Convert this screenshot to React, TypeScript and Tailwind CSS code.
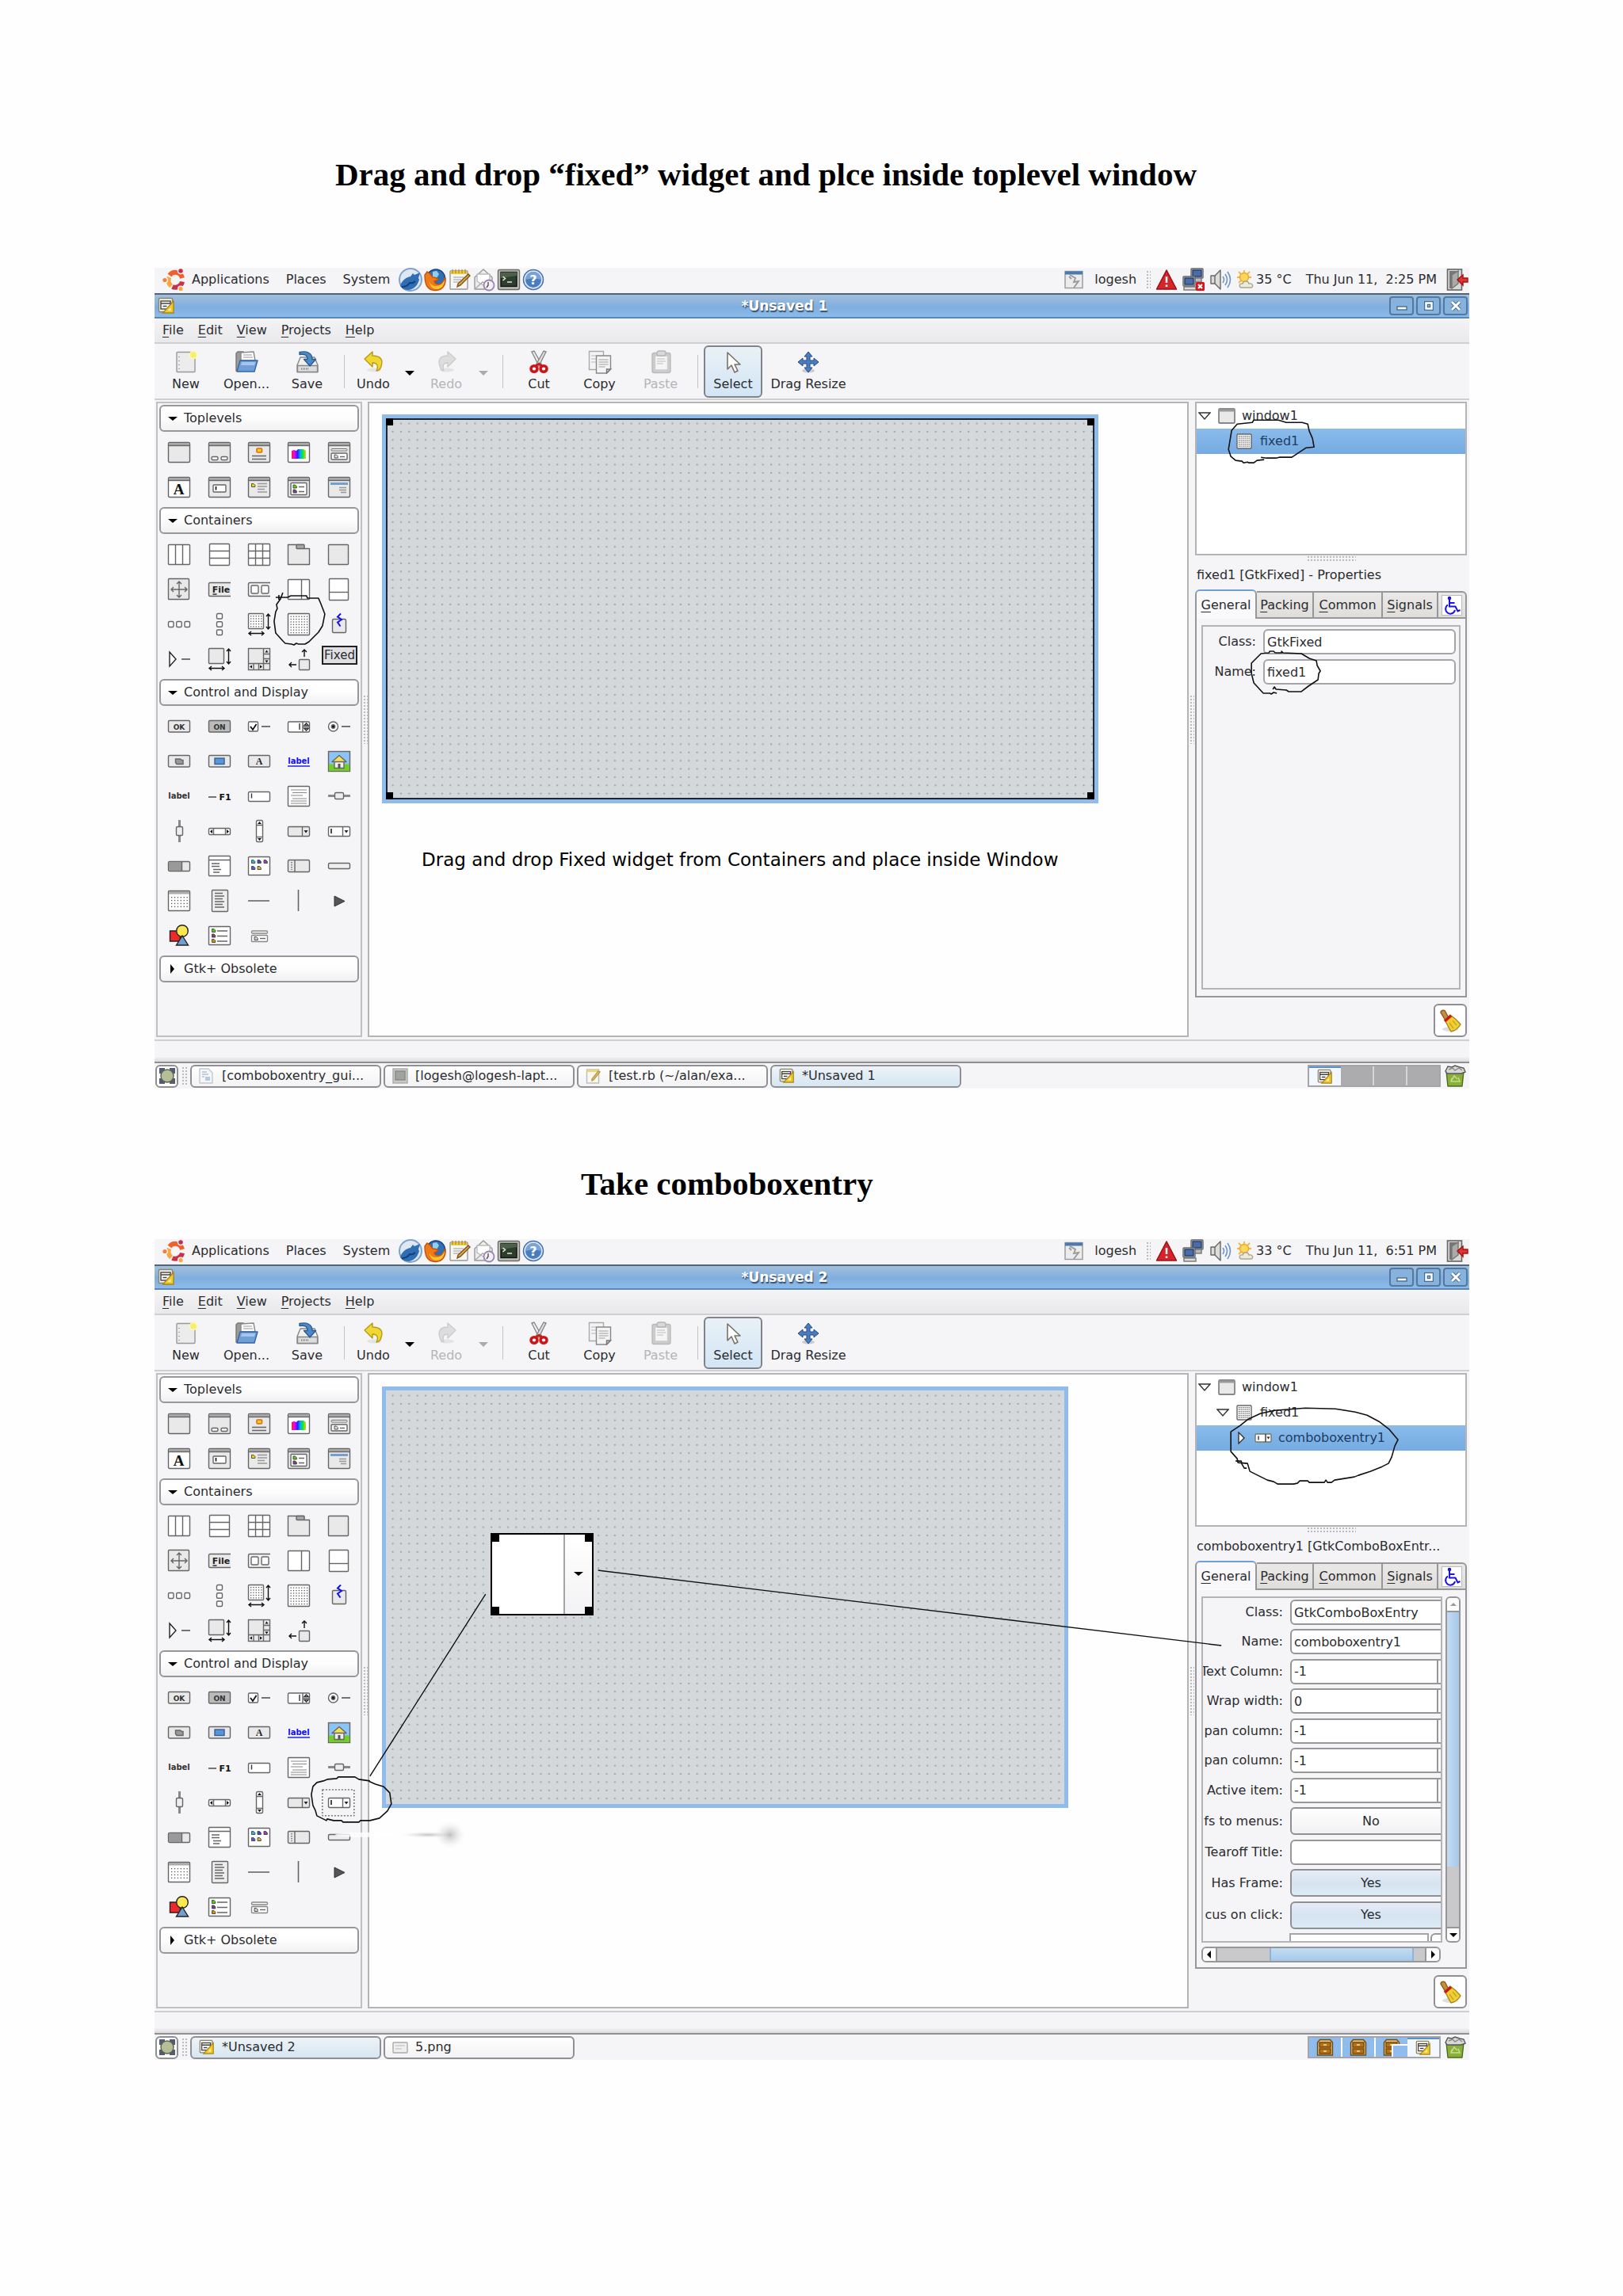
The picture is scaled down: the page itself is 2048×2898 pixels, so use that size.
import type { ReactNode } from 'react';

type Field = { label: string; value: string; kind: 'text' | 'spin' | 'toggle' };

const G = '#666';

const Svg = ({ children, size = 'w-[30px] h-[30px]', box = '0 0 30 30' }: { children: ReactNode; size?: string; box?: string }) => (
  <svg className={`${size} block shrink-0`} viewBox={box} fill="none" stroke={G} strokeWidth="1.4" aria-hidden="true">
    {children}
  </svg>
);

const Frame = ({ fill = '#e9e9ea', children }: { fill?: string; children?: ReactNode }) => (
  <Svg>
    <rect x="1.5" y="2.5" width="27" height="25" rx="1.5" fill={fill} />
    <path d="M2 3h26v3.5H2z" fill="#a9a9a9" stroke="none" />
    <path d="M2 6.5h26" />
    {children}
  </Svg>
);

const dots = (x: number, y: number, cols: number, rows: number, step: number) => {
  const out = [];
  for (let r = 0; r < rows; r++) {
    for (let c = 0; c < cols; c++) {
      out.push(<rect key={`${r}-${c}`} x={x + c * step} y={y + r * step} width="1.3" height="1.3" fill="#555" stroke="none" />);
    }
  }
  return out;
};

const page = (x: number, y: number, color: string) => (
  <path d={`M${x} ${y}h2.5l1.8 1.8v2.2h-4.3z`} fill={color} stroke="#444" strokeWidth="0.9" />
);

const toplevels = [
  { name: 'Window', icon: <Frame /> },
  {
    name: 'Dialog Box',
    icon: (
      <Frame>
        <rect x="5" y="20.5" width="8" height="4" rx="1.5" fill="#fff" />
        <rect x="17" y="20.5" width="8" height="4" rx="1.5" fill="#fff" />
      </Frame>
    ),
  },
  {
    name: 'About Dialog',
    icon: (
      <Frame>
        <rect x="12" y="10" width="6.5" height="5" rx="1" fill="#ffd21f" stroke="#e06a10" strokeWidth="1.6" />
        <path d="M6 19.5h18M6 23.5h18" />
      </Frame>
    ),
  },
  {
    name: 'Color Selection Dialog',
    icon: (
      <Frame fill="#fff">
        <defs>
          <linearGradient id="rainbow">
            <stop offset="0" stopColor="#f22" />
            <stop offset="0.2" stopColor="#e0f" />
            <stop offset="0.42" stopColor="#22f" />
            <stop offset="0.6" stopColor="#0af" />
            <stop offset="0.78" stopColor="#0e3" />
            <stop offset="1" stopColor="#dc2" />
          </linearGradient>
        </defs>
        <path d="M6 23V13l3-1 3 1 2-2h7l3 2v10z" fill="url(#rainbow)" stroke="none" />
      </Frame>
    ),
  },
  {
    name: 'File Chooser Dialog',
    icon: (
      <Frame>
        <rect x="5" y="10.5" width="20" height="2.5" rx="1" fill="#fff" strokeWidth="1" />
        <rect x="5" y="16" width="20" height="8" rx="1" fill="#fff" />
        {page(9, 18, '#ddd')}
        <path d="M16 20.5h6" />
      </Frame>
    ),
  },
  {
    name: 'Font Selection Dialog',
    icon: (
      <Frame fill="#fff">
        <text x="14.5" y="23.5" textAnchor="middle" fontFamily="Liberation Serif, serif" fontWeight="bold" fontSize="19" fill="#111" stroke="none">A</text>
      </Frame>
    ),
  },
  {
    name: 'Input Dialog',
    icon: (
      <Frame>
        <rect x="7" y="12" width="16" height="9" rx="1" fill="#fff" />
        <path d="M10.5 14v4.5" stroke="#111" strokeWidth="1.6" />
      </Frame>
    ),
  },
  {
    name: 'Message Dialog',
    icon: (
      <Frame>
        {page(5.5, 10.5, '#f5d300')}
        <path d="M13 10.5h12M13 14h12M13 17.5h9M13 21h12" stroke="#999" />
      </Frame>
    ),
  },
  {
    name: 'Recent Chooser Dialog',
    icon: (
      <Frame>
        <rect x="5" y="9.5" width="20" height="15" rx="1" fill="#fff" />
        {page(8, 12, '#5c0')}
        {page(8, 18, '#747')}
        <path d="M15 14.5h7M15 20.5h7" />
      </Frame>
    ),
  },
  {
    name: 'Assistant',
    icon: (
      <Frame>
        <path d="M4 10.5h22" stroke="#729fcf" strokeWidth="3" />
        <path d="M15 15.5h9M15 18.5h9M17 21.5h7" stroke="#999" />
      </Frame>
    ),
  },
];

const containers = [
  {
    name: 'Horizontal Box',
    icon: (
      <Svg>
        <rect x="1.5" y="2.5" width="27" height="25" rx="1" fill="#fff" />
        <path d="M10.5 3v24M19.5 3v24" />
      </Svg>
    ),
  },
  {
    name: 'Vertical Box',
    icon: (
      <Svg>
        <rect x="2.5" y="1.5" width="25" height="27" rx="1" fill="#fff" />
        <path d="M3 10.5h24M3 19.5h24" />
      </Svg>
    ),
  },
  {
    name: 'Table',
    icon: (
      <Svg>
        <rect x="1.5" y="1.5" width="27" height="27" rx="1" fill="#fff" />
        <path d="M10.5 2v26M19.5 2v26M2 10.5h26M2 19.5h26" />
      </Svg>
    ),
  },
  {
    name: 'Notebook',
    icon: (
      <Svg>
        <path d="M1.5 2.5h20v5h7v20h-27z" fill="#e9e9ea" strokeLinejoin="round" />
        <rect x="12" y="2.5" width="10" height="5" rx="1" fill="#aaa" />
      </Svg>
    ),
  },
  { name: 'Frame', icon: <Svg><rect x="1.5" y="2.5" width="25" height="25" rx="1" fill="#e9e9ea" /></Svg> },
  {
    name: 'Aspect Frame',
    icon: (
      <Svg>
        <rect x="1.5" y="1.5" width="26" height="26" rx="1" fill="#e9e9ea" />
        <path d="M15 5v20M5 15h20M12 8l3-3 3 3M12 22l3 3 3-3M8 12l-3 3 3 3M22 12l3 3-3 3" />
      </Svg>
    ),
  },
  {
    name: 'Menu Bar',
    icon: (
      <Svg>
        <path d="M29 6.5H3A1.5 1.5 0 0 0 1.5 8v14A1.5 1.5 0 0 0 3 23.5h26" fill="#e9e9ea" />
        <text x="17" y="19" textAnchor="middle" fontFamily="DejaVu Sans, sans-serif" fontWeight="bold" fontSize="11" fill="#222" stroke="none">File</text>
        <path d="M6.5 21h5" stroke="#222" />
      </Svg>
    ),
  },
  {
    name: 'Toolbar',
    icon: (
      <Svg>
        <path d="M29 6.5H3A1.5 1.5 0 0 0 1.5 8v14A1.5 1.5 0 0 0 3 23.5h26" fill="#f2f2f2" />
        <rect x="5" y="10" width="9" height="10" rx="1.5" fill="#fff" />
        <rect x="18" y="10" width="9" height="10" rx="1.5" fill="#fff" />
      </Svg>
    ),
  },
  {
    name: 'Horizontal Panes',
    icon: (
      <Svg>
        <rect x="1.5" y="2.5" width="27" height="25" rx="1" fill="#fff" />
        <path d="M18.5 3v24" />
      </Svg>
    ),
  },
  {
    name: 'Vertical Panes',
    icon: (
      <Svg>
        <rect x="2.5" y="1.5" width="24" height="27" rx="1" fill="#fff" />
        <path d="M3 18.5h23" />
      </Svg>
    ),
  },
  {
    name: 'Horizontal Button Box',
    icon: (
      <Svg>
        <rect x="1.5" y="11.5" width="6.5" height="7" rx="1.5" fill="#fff" />
        <rect x="11.7" y="11.5" width="6.5" height="7" rx="1.5" fill="#fff" />
        <rect x="22" y="11.5" width="6.5" height="7" rx="1.5" fill="#fff" />
      </Svg>
    ),
  },
  {
    name: 'Vertical Button Box',
    icon: (
      <Svg>
        <rect x="11.5" y="1.5" width="7" height="6.5" rx="1.5" fill="#fff" />
        <rect x="11.5" y="11.7" width="7" height="6.5" rx="1.5" fill="#fff" />
        <rect x="11.5" y="22" width="7" height="6.5" rx="1.5" fill="#fff" />
      </Svg>
    ),
  },
  {
    name: 'Layout',
    icon: (
      <Svg>
        <rect x="1.5" y="1.5" width="19" height="19" rx="1" fill="#fff" />
        {dots(4, 4, 5, 5, 3.3)}
        <path d="M26.5 2v19M24 5l2.500-3 2.500 3M24 18l2.500 3 2.500-3M2 26.500h19M5 24l-3 2.500 3 2.500M18 24l3 2.500-3 2.500" stroke="#111" />
      </Svg>
    ),
  },
  {
    name: 'Fixed',
    icon: (
      <Svg>
        <rect x="1.5" y="1.5" width="27" height="27" rx="1" fill="#fff" />
        {dots(4.5, 4.5, 7, 7, 3.4)}
      </Svg>
    ),
  },
  {
    name: 'Event Box',
    icon: (
      <Svg>
        <rect x="6.5" y="8.5" width="17" height="17" rx="1.5" fill="#e9e9ea" />
        <path d="M17 1.5l-4 4 5 3.5-5 3.5 3.5 5" stroke="#11e" strokeWidth="2" />
      </Svg>
    ),
  },
  {
    name: 'Expander',
    icon: (
      <Svg>
        <path d="M3 6l8 9-8 9z" fill="#fff" stroke="#222" />
        <path d="M18 15h11" strokeWidth="1.8" />
      </Svg>
    ),
  },
  {
    name: 'Viewport',
    icon: (
      <Svg>
        <rect x="1.5" y="1.5" width="19" height="19" rx="1" fill="#e9e9ea" />
        <path d="M26.5 2v19M24 5l2.5-3 2.5 3M24 18l2.5 3 2.5-3M2 26.5h19M5 24l-3 2.5 3 2.5M18 24l3 2.5-3 2.5" stroke="#111" />
      </Svg>
    ),
  },
  {
    name: 'Scrolled Window',
    icon: (
      <Svg>
        <rect x="1.5" y="1.5" width="27" height="27" fill="#e9e9ea" />
        <path d="M20.5 2v26M2 20.5h26M20.5 8.5h8M20.5 14.5h8M8 20.5v8M14.500 20.500v8" />
        <path d="M22.5 6.5l2-3 2 3zM22.5 16.5l2 3 2-3zM6 22.5l-3 2 3 2zM16 22.5l3 2-3 2z" fill="#111" stroke="none" />
      </Svg>
    ),
  },
  {
    name: 'Alignment',
    icon: (
      <Svg>
        <rect x="15.5" y="15.5" width="13" height="13" rx="1" fill="#e9e9ea" />
        <path d="M22 12V3M19 6l3-3 3 3M12 22H3M6 19l-3 3 3 3" stroke="#111" />
      </Svg>
    ),
  },
];

const controls = [
  {
    name: 'Button',
    icon: (
      <Svg>
        <rect x="1.5" y="7.5" width="27" height="14.5" rx="1.5" fill="#e9e9ea" />
        <text x="15" y="18.5" textAnchor="middle" fontFamily="DejaVu Sans, sans-serif" fontSize="9" fontWeight="bold" fill="#333" stroke="none">OK</text>
      </Svg>
    ),
  },
  {
    name: 'Toggle Button',
    icon: (
      <Svg>
        <rect x="1.5" y="7.5" width="27" height="14.5" rx="1.5" fill="#bbb" />
        <text x="15" y="18.5" textAnchor="middle" fontFamily="DejaVu Sans, sans-serif" fontSize="9" fontWeight="bold" fill="#333" stroke="none">ON</text>
      </Svg>
    ),
  },
  {
    name: 'Check Button',
    icon: (
      <Svg>
        <rect x="1.5" y="9" width="12" height="12" rx="1.5" fill="#fff" />
        <path d="M4 15l3 4 4.5-7" stroke="#111" strokeWidth="1.8" />
        <path d="M18 15h11" strokeWidth="1.8" />
      </Svg>
    ),
  },
  {
    name: 'Spin Button',
    icon: (
      <Svg>
        <rect x="1.5" y="9" width="27" height="13" rx="1.5" fill="#fff" />
        <path d="M20 9v13M20 15.5h8" />
        <path d="M16 11v8M22 13.5l2.5-2.5 2.5 2.5zM22 17.5l2.5 2.5 2.5-2.5z" stroke="#333" />
      </Svg>
    ),
  },
  {
    name: 'Radio Button',
    icon: (
      <Svg>
        <circle cx="7.5" cy="15" r="6" fill="#fff" />
        <circle cx="7.5" cy="15" r="2.2" fill="#111" />
        <path d="M18 15h11" strokeWidth="1.8" />
      </Svg>
    ),
  },
  {
    name: 'File Chooser Button',
    icon: (
      <Svg>
        <rect x="1.5" y="7.5" width="27" height="14.5" rx="1.5" fill="#e9e9ea" />
        <path d="M10.5 12h6l2 1.5h1.5v5h-8l-1.5-2z" fill="#999" />
      </Svg>
    ),
  },
  {
    name: 'Color Button',
    icon: (
      <Svg>
        <rect x="1.5" y="7.5" width="27" height="14.5" rx="1.5" fill="#e9e9ea" />
        <rect x="9" y="11" width="12" height="7.5" fill="#5b95d6" stroke="#345f9c" />
      </Svg>
    ),
  },
  {
    name: 'Font Button',
    icon: (
      <Svg>
        <rect x="1.5" y="7.5" width="27" height="14.5" rx="1.5" fill="#e9e9ea" />
        <text x="15" y="19" textAnchor="middle" fontFamily="Liberation Serif, serif" fontSize="12" fontWeight="bold" fill="#222" stroke="none">A</text>
      </Svg>
    ),
  },
  {
    name: 'Link Button',
    icon: (
      <Svg>
        <text x="15" y="18" textAnchor="middle" fontFamily="DejaVu Sans, sans-serif" fontSize="10" fontWeight="bold" fill="#11e" stroke="none">label</text>
        <path d="M1 21h28" stroke="#11e" />
      </Svg>
    ),
  },
  {
    name: 'Image',
    icon: (
      <Svg>
        <rect x="1.5" y="2.5" width="27" height="25" fill="#8cc4f7" />
        <path d="M2 18.5h26v8.500H2z" fill="#6fd020" stroke="none" />
        <path d="M9 15h12v8.5H9z" fill="#eee" />
        <path d="M6 15.5l9-8 9 8z" fill="#f3e14e" strokeLinejoin="round" />
        <path d="M13.5 18h3v5.5h-3z" fill="#555" stroke="none" />
      </Svg>
    ),
  },
  {
    name: 'Label',
    icon: (
      <Svg>
        <text x="15" y="18" textAnchor="middle" fontFamily="DejaVu Sans, sans-serif" fontSize="10" fontWeight="bold" fill="#333" stroke="none">label</text>
      </Svg>
    ),
  },
  {
    name: 'Accelerator Label',
    icon: (
      <Svg>
        <path d="M1 16h10" strokeWidth="1.8" />
        <text x="22" y="20" textAnchor="middle" fontFamily="DejaVu Sans, sans-serif" fontSize="11" fontWeight="bold" fill="#111" stroke="none">F1</text>
      </Svg>
    ),
  },
  {
    name: 'Text Entry',
    icon: (
      <Svg>
        <rect x="1.5" y="9.5" width="27" height="12" rx="1.5" fill="#fff" />
        <path d="M5.5 11.5v6" stroke="#333" />
      </Svg>
    ),
  },
  {
    name: 'Text View',
    icon: (
      <Svg>
        <rect x="1.5" y="2.5" width="27" height="25" rx="1" fill="#fff" />
        <path d="M5 7h20M7 10.5h18M5 14h15M7 18h18M5 21h20M5 24h20" stroke="#888" strokeWidth="1" />
      </Svg>
    ),
  },
  {
    name: 'Horizontal Scale',
    icon: (
      <Svg>
        <path d="M1 14.5h28" stroke="#888" strokeWidth="3" />
        <rect x="9.5" y="10.5" width="11" height="8" rx="1.5" fill="#eee" />
      </Svg>
    ),
  },
  {
    name: 'Vertical Scale',
    icon: (
      <Svg>
        <path d="M15.5 1v28" stroke="#888" strokeWidth="3" />
        <rect x="11.5" y="9.5" width="8" height="11" rx="1.5" fill="#eee" />
      </Svg>
    ),
  },
  {
    name: 'Horizontal Scrollbar',
    icon: (
      <Svg>
        <rect x="1.5" y="11.5" width="27" height="8" rx="1.5" fill="#fff" />
        <path d="M7.5 11.5v8M22.5 11.5v8" />
        <path d="M6 13l-3 2.5 3 2.5zM24 13l3 2.5-3 2.5z" fill="#111" stroke="none" />
      </Svg>
    ),
  },
  {
    name: 'Vertical Scrollbar',
    icon: (
      <Svg>
        <rect x="11.5" y="1.5" width="8" height="27" rx="1.5" fill="#fff" />
        <path d="M11.5 7.5h8M11.5 22.5h8" />
        <path d="M13 6l2.5-3 2.5 3zM13 24l2.5 3 2.5-3z" fill="#111" stroke="none" />
      </Svg>
    ),
  },
  {
    name: 'Combo Box',
    icon: (
      <Svg>
        <rect x="1.5" y="9.5" width="27" height="12" rx="1.5" fill="#e9e9ea" />
        <path d="M19.5 9.5v12" />
        <path d="M21.5 14l2.5 3.5 2.5-3.5z" fill="#222" stroke="none" />
      </Svg>
    ),
  },
  {
    name: 'Combo Box Entry',
    icon: (
      <Svg>
        <rect x="1.5" y="9.5" width="27" height="12" rx="1.5" fill="#fff" />
        <path d="M19.5 9.5v12" />
        <path d="M5 12v6" stroke="#111" strokeWidth="1.5" />
        <path d="M21.5 14l2.5 3.5 2.5-3.5z" fill="#222" stroke="none" />
      </Svg>
    ),
  },
  {
    name: 'Progress Bar',
    icon: (
      <Svg>
        <rect x="1.5" y="9.5" width="27" height="12" rx="1.5" fill="#e9e9ea" />
        <path d="M2 10h16v11H2z" fill="#999" stroke="none" />
        <path d="M18.5 9.5v12" />
      </Svg>
    ),
  },
  {
    name: 'Tree View',
    icon: (
      <Svg>
        <rect x="1.5" y="2.5" width="27" height="25" rx="1" fill="#fff" />
        <path d="M2 7.5h26M5 12h10M5 15.5h10M7 19.5h10M7 23h8" />
      </Svg>
    ),
  },
  {
    name: 'Icon View',
    icon: (
      <Svg>
        <rect x="1.5" y="3.5" width="27" height="23" rx="1" fill="#fff" />
        {page(5.5, 7.5, '#2bc')}
        {page(13, 7.5, '#44c')}
        {page(21, 7.5, '#a3b')}
        {page(5.5, 15.5, '#55d')}
        {page(13, 15.5, '#da3')}
      </Svg>
    ),
  },
  {
    name: 'Handle Box',
    icon: (
      <Svg>
        <rect x="1.5" y="7.5" width="27" height="15" rx="1.5" fill="#e9e9ea" />
        <path d="M10 7.5v15" />
        <path d="M6 10v10" strokeDasharray="1.5 1.5" />
      </Svg>
    ),
  },
  { name: 'Status Bar', icon: <Svg><rect x="1.5" y="11.5" width="27" height="7" rx="1.5" fill="#eee" /></Svg> },
  {
    name: 'Calendar',
    icon: (
      <Svg>
        <rect x="1.5" y="2.5" width="27" height="25" rx="1" fill="#fff" />
        <path d="M2 3h26v3.5H2z" fill="#aaa" stroke="none" />
        {dots(5, 10, 6, 4, 3.9)}
      </Svg>
    ),
  },
  {
    name: 'Popup Menu',
    icon: (
      <Svg>
        <rect x="5.5" y="1.5" width="20" height="27" rx="1" fill="#eee" />
        <path d="M9 5.5h10M9 9h12M9 12.5h10M9 16h12M9 19.5h10M9 23h12" />
      </Svg>
    ),
  },
  { name: 'Horizontal Separator', icon: <Svg><path d="M1 15h27" strokeWidth="1.6" /></Svg> },
  { name: 'Vertical Separator', icon: <Svg><path d="M14.5 1v27" strokeWidth="1.6" /></Svg> },
  { name: 'Arrow', icon: <Svg><path d="M9 9l13 6.5L9 22z" fill="#555" stroke="#333" strokeWidth="1" /></Svg> },
  {
    name: 'Drawing Area',
    icon: (
      <Svg>
        <path d="M3.5 9h13v13h-13z" fill="#ef2929" stroke="#222" />
        <circle cx="19" cy="9" r="7.3" fill="#fce94f" stroke="#222" />
        <path d="M19 15l7.5 12h-15z" fill="#729fcf" stroke="#222" />
      </Svg>
    ),
  },
  {
    name: 'Recent Chooser',
    icon: (
      <Svg>
        <rect x="1.5" y="3.5" width="27" height="23" rx="1" fill="#fff" />
        {page(5.5, 6.5, '#5c0')}
        {page(5.5, 13, '#747')}
        {page(5.5, 19.5, '#d80')}
        <path d="M12 9h13M12 15.5h13M12 22h13" />
      </Svg>
    ),
  },
  {
    name: 'File Chooser Widget',
    icon: (
      <Svg>
        <rect x="5.5" y="9" width="20" height="3" rx="1.2" fill="#fff" stroke="#888" />
        <rect x="5.5" y="14.5" width="20" height="8" rx="1" fill="#fff" stroke="#888" />
        {page(9, 16.5, '#ccc')}
        <path d="M16 18.5h7" />
      </Svg>
    ),
  },
];

const GladeIcon = ({ size = 'w-[22px] h-[22px]' }: { size?: string }) => (
  <Svg size={size} box="0 0 22 22">
    <rect x="1.5" y="1.5" width="17" height="17" rx="1" fill="#f6f2e6" stroke="#8a8468" />
    <rect x="4" y="5" width="12" height="10" fill="#fff" stroke="#444" />
    <path d="M4 8h12M6.5 11.5h5" stroke="#444" strokeWidth="1.6" />
    <path d="M20 5v15H6.5z" fill="#f2c92c" stroke="#a8861a" />
    <path d="M16.5 13v4h-4z" fill="#fff6c8" stroke="none" />
  </Svg>
);

const UbuntuLogo = () => (
  <Svg>
    <g strokeWidth="6">
      <path d="M10 9.5A9 9 0 0 1 26 13" stroke="#f0602c" />
      <path d="M26 17.5A9 9 0 0 1 13.5 24" stroke="#c9304a" />
      <path d="M12 23A9 9 0 0 1 9.5 12" stroke="#f7a641" />
    </g>
    <circle cx="4" cy="15.5" r="3.3" fill="#f0803c" stroke="#f5f4f6" />
    <circle cx="24" cy="4" r="3.5" fill="#c2304c" stroke="#f5f4f6" />
    <circle cx="24" cy="26.5" r="3.3" fill="#f7a641" stroke="#f5f4f6" />
  </Svg>
);

const launchers = [
  {
    name: 'Thunderbird',
    icon: (
      <Svg size="w-8 h-8" box="0 0 32 32">
        <circle cx="16" cy="16" r="14" fill="#dfe8f2" stroke="#7fa3cc" strokeWidth="2" />
        <path d="M3 24c2-7 7-11 13-12l3-4 2 2 7-3-2 7 1 2c-2 8-8 13-14 13-5 0-8-2-10-5z" fill="#2f6db5" stroke="none" />
        <path d="M5 25c5 0 8-2 10-5 3 1 5 0 7-2" stroke="#163f7c" strokeWidth="2" />
      </Svg>
    ),
  },
  {
    name: 'Firefox',
    icon: (
      <Svg>
        <circle cx="16" cy="13.5" r="11.5" fill="#2f6fb4" stroke="#1a3f7a" />
        <path d="M12 5l5-1 3 4-3 5-5 1z" fill="#8fd0ee" stroke="none" />
        <path d="M2 9c0 12 3 19 13 19.5C24 29 29 22 28 12c-2 6-5 9-9 9-3 0-5-2-5-4l5-2c-2-3-5-3-7-3l-3-4-4-3z" fill="#ee7a1a" stroke="#c9500e" />
        <path d="M27 15c-2 5-6 8-11 8-4 0-7-2-8-6 0 6 4 10 9 10 6 0 10-5 10-12z" fill="#f9c52b" stroke="none" />
      </Svg>
    ),
  },
  {
    name: 'Text Editor',
    icon: (
      <Svg size="w-7 h-7" box="0 0 28 28">
        <rect x="2" y="3" width="22" height="23" rx="1" fill="#f6f6f4" stroke="#999" />
        <path d="M3 3h20v4H3z" fill="#f0cb3a" stroke="none" />
        <path d="M5 1v5M9 1v5M13 1v5M17 1v5M21 1v5" stroke="#b5912a" />
        <path d="M6 11h13M6 14h10M6 17h8" stroke="#bbb" />
        <path d="M25 7l2 2-12 12-4 2 1-4z" fill="#e0a64e" stroke="#7d5318" />
      </Svg>
    ),
  },
  {
    name: 'Evolution',
    icon: (
      <Svg>
        <path d="M3 12L14 2l11 10v15H3z" fill="#eee" stroke="#999" strokeLinejoin="round" />
        <path d="M6 8h16v9l-8 5-8-5z" fill="#fff" stroke="#bbb" />
        <path d="M3 27l10-9 12 9" stroke="#aaa" />
        <circle cx="21" cy="22" r="6.5" fill="#f4f0f8" stroke="#9a86b4" strokeWidth="1.8" />
        <path d="M20 18v4l-2 3" stroke="#554" />
      </Svg>
    ),
  },
  {
    name: 'Terminal',
    icon: (
      <Svg size="w-[30px] h-7" box="0 0 30 28">
        <rect x="1.5" y="1.5" width="27" height="25" rx="2" fill="#bfc0ba" stroke="#6b6c66" />
        <rect x="5" y="4.5" width="20" height="18" fill="#2c3f2c" stroke="#111" />
        <path d="M5 12l20-3v-4.5H5z" fill="#4c604a" stroke="none" />
        <path d="M7.5 10l3 2.5-3 2.5M13 17h6" stroke="#dfe8d8" strokeWidth="1.6" />
      </Svg>
    ),
  },
  {
    name: 'Help',
    icon: (
      <Svg size="w-7 h-7" box="0 0 28 28">
        <circle cx="14" cy="14" r="12.5" fill="#dbe6f4" stroke="#3f6fae" strokeWidth="1.5" />
        <circle cx="14" cy="14" r="10" fill="#4a7cc0" stroke="none" />
        <path d="M4 14a10 10 0 0 1 20 0q-10-3-20 0z" fill="#7ba3d8" stroke="none" />
        <text x="14" y="20" textAnchor="middle" fontFamily="DejaVu Sans, sans-serif" fontWeight="bold" fontSize="16" fill="#fff" stroke="none">?</text>
      </Svg>
    ),
  },
];

const NewIcon = () => (
  <Svg>
    <rect x="3" y="2.5" width="23" height="25" rx="1" fill="#ececec" stroke="#999" />
    <path d="M6 8v1M6 13v1M6 18v1M6 23v1" stroke="#888" />
    <circle cx="24" cy="6" r="4.5" fill="#f7ee6a" stroke="#fff8b0" strokeWidth="1.5" />
  </Svg>
);

const OpenIcon = () => (
  <Svg>
    <path d="M2 26V4l2-2h7l2 2h9v20z" fill="#9b9b97" stroke="#777" />
    <path d="M8 3l16-1 2 11H8z" fill="#fff" stroke="#888" />
    <path d="M11 6h11M11 9h12" stroke="#bbb" />
    <path d="M7 13h22l-4 14H3z" fill="#6f9fd6" stroke="#3465a4" strokeLinejoin="round" />
    <path d="M9 15h17l-1 4H8z" fill="#a5c5ea" stroke="none" />
  </Svg>
);

const SaveIcon = () => (
  <Svg>
    <path d="M6 9h18l4 10v8.5H2V19z" fill="#f0f0ee" stroke="#888" strokeLinejoin="round" />
    <path d="M2.5 19.5h25v8h-25z" fill="#ddd" stroke="#888" />
    <path d="M7 23.5h10" stroke="#777" strokeWidth="2" strokeDasharray="1 1" />
    <path d="M5 2.5c9-2 16 1 16 9h4.5L18 20l-7.5-8.5H15c0-5-3-7-10-6z" fill="#4a8ac6" stroke="#2a5c92" strokeLinejoin="round" />
  </Svg>
);

const UndoIcon = ({ off }: { off?: boolean }) => (
  <Svg>
    <ellipse cx="16" cy="25" rx="9" ry="2.5" fill="#e4e4e4" stroke="none" />
    {off ? (
      <path d="M27 11L17 2v5C8 7 4 12 7 20c1 4 3 6 5 6-2-6-1-10 5-10v5z" fill="#ddd" stroke="#ccc" strokeLinejoin="round" />
    ) : (
      <path d="M4 11l10-9v5c10 0 14 5 11 13-1 4-3 6-6 6 3-6 1-10-5-10v5z" fill="#f0d732" stroke="#b79a12" strokeLinejoin="round" />
    )}
  </Svg>
);

const CutIcon = () => (
  <Svg>
    <path d="M6 2l3-1 10 18-4 1z" fill="#eee" stroke="#888" />
    <path d="M24 2l-3-1-10 18 4 1z" fill="#ddd" stroke="#888" />
    <ellipse cx="9" cy="23.5" rx="4" ry="3.8" stroke="#cc1616" strokeWidth="3.5" />
    <ellipse cx="21" cy="23.5" rx="4" ry="3.8" stroke="#cc1616" strokeWidth="3.5" />
    <path d="M11 20l4-3 4 3" stroke="#cc1616" strokeWidth="2.5" />
  </Svg>
);

const CopyIcon = () => (
  <Svg>
    <path d="M1.5 1.5h18v23h-18z" fill="#f4f4f4" stroke="#aaa" />
    <path d="M4 7h6M4 11h6M4 15h6" stroke="#ccc" />
    <path d="M10.5 7h18v17l-5 5h-13z" fill="#f4f4f4" stroke="#888" />
    <path d="M13.5 12h12M13.5 15h12M13.5 18h12M13.5 21h8" stroke="#bbb" />
    <path d="M23.5 29v-5h5z" fill="#ccc" stroke="#777" />
  </Svg>
);

const PasteIcon = () => (
  <Svg>
    <rect x="4" y="3.5" width="23" height="25" rx="2.5" fill="#ccc" stroke="#bbb" />
    <path d="M7.5 7h16v18h-16z" fill="#f5f5f5" stroke="#ccc" />
    <rect x="10" y="1" width="11" height="6" rx="2.5" fill="#d8d8d8" stroke="#b5b5b5" />
    <path d="M10 11h10M10 14h11M10 17h8" stroke="#d0d0d0" />
  </Svg>
);

const SelectIcon = () => (
  <Svg>
    <path d="M8 3v21l5-5 4 9 4-2-4-8h7z" fill="#fff" stroke="#777264" strokeWidth="1.6" strokeLinejoin="round" />
  </Svg>
);

const ResizeIcon = () => (
  <Svg>
    <ellipse cx="15" cy="26" rx="8" ry="2.5" fill="#ccc" stroke="none" />
    <path d="M15 2l5 6h-3v5h5v-3l6 5-6 5v-3h-5v5h3l-5 6-5-6h3v-5H8v3l-6-5 6-5v3h5V8h-3z" fill="#4a7cc0" stroke="#244b82" strokeWidth="1" strokeLinejoin="round" />
  </Svg>
);

const BroomIcon = () => (
  <Svg>
    <ellipse cx="15" cy="26" rx="10" ry="3" fill="#ddd" stroke="none" />
    <path d="M3 5c0-3 5-4 6-1l4 8-4 3z" fill="#c98b3c" stroke="#8a5a1c" />
    <path d="M8 14l7-6c6 4 9 7 13 12-3 5-7 8-12 9-3-5-5-9-8-15z" fill="#f0cf34" stroke="#a8861a" strokeLinejoin="round" />
    <path d="M8 16l8-7" stroke="#cc1616" strokeWidth="3.5" />
    <path d="M14 18l5 7M18 15l5 6" stroke="#c9a41e" />
  </Svg>
);

const TrashIcon = () => (
  <Svg size="w-7 h-7" box="0 0 28 28">
    <path d="M3 8h22l-2 19H5z" fill="#88b03a" stroke="#4d6b1c" strokeLinejoin="round" />
    <path d="M2 8l3-6 5 1 4-2 6 2 5 1 2 5-5 2H4z" fill="#d8d8d6" stroke="#555" />
    <path d="M6 6l5-2 3 3 5-3 4 3" stroke="#888" />
    <path d="M10 19l3-5 4 4M18 16l2 5h-8M10 17l-1 4h3" stroke="#c5dd8a" strokeWidth="1.5" />
  </Svg>
);

const CabinetIcon = () => (
  <Svg size="w-[22px] h-[22px]" box="0 0 22 22">
    <path d="M1.5 21V5l3-3.5h13l3 3.5v16z" fill="#e2c184" stroke="#6d4c14" />
    <path d="M4 5h14v6H4zM4 13h14v6H4z" fill="#b87316" stroke="#7a4a08" />
    <path d="M9 8h4M9 16h4" stroke="#f5dca0" />
  </Svg>
);

const Wheelchair = () => (
  <Svg size="w-[26px] h-[26px]" box="0 0 26 26">
    <rect x="0.5" y="0.5" width="25" height="25" fill="#fff" stroke="#bbb" strokeWidth="1" />
    <g stroke="#1b12e0" strokeWidth="2">
      <circle cx="10" cy="4" r="1.3" fill="#1b12e0" />
      <path d="M10 6v8.5h7.5l3 6 3-1.5M10.500 10h6" />
      <path d="M8 12.5a6 6 0 1 0 9 6.5" />
    </g>
  </Svg>
);

const Key = ({ text }: { text: string }) => (
  <span>
    <span className="underline decoration-1 underline-offset-3">{text[0]}</span>
    {text.slice(1)}
  </span>
);

const GripV = () => (
  <span className="w-[6px] h-[62px] self-center shrink-0 bg-[radial-gradient(#bbb_1px,transparent_1px)] bg-[size:4px_4px]" />
);

const TopPanel = ({ temp, time, offline }: { temp: string; time: string; offline: boolean }) => (
  <header className="flex items-center h-8 pl-[9px] pr-px pb-[2px] bg-[#f5f4f6]">
    <UbuntuLogo />
    <nav className="flex items-center gap-[21px] pl-2">
      <a href="#applications">Applications</a>
      <a href="#places">Places</a>
      <a href="#system">System</a>
    </nav>
    <div className="flex items-center pl-[10px]">
      {launchers.map((l) => (
        <button key={l.name} aria-label={l.name} className="flex w-[31px] justify-center">{l.icon}</button>
      ))}
    </div>
    <div className="flex items-center ml-auto">
      <Svg size="w-6 h-6" box="0 0 24 24">
        <rect x="1" y="1.5" width="22" height="21" fill="#ececec" stroke="#999" />
        <path d="M1 1.5h22v4H1z" fill="#4a7ab0" stroke="none" />
        <path d="M7 6l7 4-2 5 6-1-6 8M6 8l3 3" stroke="#999" strokeWidth="1.8" />
      </Svg>
      <span className="pl-[14px]">logesh</span>
      <span className="w-[6px] h-6 ml-3 bg-[radial-gradient(#bbb_1px,transparent_1px)] bg-[size:4px_4px]" />
      <span className="flex items-center gap-[6px] pl-[6px]">
        <Svg size="w-7 h-7" box="0 0 28 28">
          <path d="M14 2l12.500 24h-25z" fill="#d8232a" stroke="#9c1014" strokeWidth="1.5" strokeLinejoin="round" />
          <path d="M14 10v8M14 20.5v2.5" stroke="#fff" strokeWidth="2.5" />
        </Svg>
        <Svg size="w-7 h-[30px]" box="0 0 28 30">
          <rect x="11" y="1" width="15" height="12" rx="1" fill="#d4d4d0" stroke="#666" />
          <rect x="13" y="3" width="11" height="8" fill="#4b6ca6" stroke="#223c70" />
          <rect x="15" y="13" width="9" height="5" fill="#bbb" stroke="#777" />
          <rect x="1" y="11" width="15" height="12" rx="1" fill="#d4d4d0" stroke="#666" />
          <rect x="3" y="13" width="11" height="8" fill="#4b6ca6" stroke="#223c70" />
          <rect x="2" y="24" width="15" height="4" fill="#ddd" stroke="#777" />
          {offline && (
            <g>
              <rect x="17" y="18" width="11" height="11" rx="1.5" fill="#d8131a" stroke="none" />
              <path d="M20 21l5 5M25 21l-5 5" stroke="#fff" strokeWidth="2.2" />
            </g>
          )}
        </Svg>
        <Svg size="w-7 h-7" box="0 0 28 28">
          <path d="M2 9h5l7-7v24l-7-7H2z" fill="#dcdcd8" stroke="#666" strokeLinejoin="round" />
          <path d="M7 9v10" />
          <path d="M17 10q3 4 0 8M20 7q5 7 0 14M23 4q7 10 0 20" stroke="#6c95cb" strokeWidth="1.6" />
        </Svg>
      </span>
      <span className="flex items-center gap-px pl-[6px]">
        <Svg size="w-6 h-6" box="0 0 24 24">
          <path d="M10 0v4M1 9h4M3 2l3 3M17 2l-3 3M19 9h-4M3 16l3-3" stroke="#f6b63c" strokeWidth="1.8" />
          <circle cx="10" cy="9" r="5.500" fill="#fbd75a" stroke="#f2a52a" />
          <path d="M6 22c-3-1-2-6 2-5 1-4 7-4 8 0 5-1 6 4 3 5z" fill="#eceadf" stroke="#aaa68c" />
        </Svg>
        <span>{temp}</span>
      </span>
      <span className="pl-[18px] whitespace-pre">{time}</span>
      <button aria-label="Log out" className="pl-3">
        <Svg size="w-7 h-7" box="0 0 28 28">
          <rect x="1.5" y="1" width="18" height="26" fill="#d8d8d4" stroke="#666" strokeWidth="1.6" />
          <path d="M4 3h12l-9 22H4z" fill="#777" stroke="none" />
          <path d="M7 25V8l8-5v16z" fill="#aaa" stroke="#777" />
          <path d="M14 14l7-6v4h6v5h-6v4z" fill="#e03434" stroke="#a31111" />
        </Svg>
      </button>
    </div>
  </header>
);

const TitleBar = ({ title }: { title: string }) => (
  <div className="flex items-center h-8 border-t-2 border-[#4f6678] border-b-2 border-b-[#5b87b5] pl-1 pr-[2px] bg-linear-to-b from-[#a3bfdb] via-[#7faedf] via-55% to-[#8dbbea]">
    <GladeIcon />
    <h2 className="flex-1 pl-4 text-center text-[17px] font-bold text-white [text-shadow:1px_2px_1px_#35506e]">{title}</h2>
    <div className="flex gap-[3px] ml-[10px]">
      <button aria-label="Minimize" className="flex items-center justify-center w-[31px] h-6 rounded-sm border-2 border-[#54789f] bg-[#86b2de]">
        <Svg size="w-4 h-4" box="0 0 16 16"><rect x="2" y="9" width="12" height="4" fill="#fff" stroke="#4a6c90" /></Svg>
      </button>
      <button aria-label="Maximize" className="flex items-center justify-center w-[31px] h-6 rounded-sm border-2 border-[#54789f] bg-[#86b2de]">
        <Svg size="w-4 h-4" box="0 0 16 16"><rect x="4.5" y="4.5" width="7" height="7" stroke="#4a6c90" strokeWidth="5" /><rect x="4.5" y="4.5" width="7" height="7" stroke="#fff" strokeWidth="2.5" /></Svg>
      </button>
      <button aria-label="Close" className="flex items-center justify-center w-[31px] h-6 rounded-sm border-2 border-[#54789f] bg-[#86b2de]">
        <Svg size="w-4 h-4" box="0 0 16 16"><path d="M3 3l10 10M13 3L3 13" stroke="#4a6c90" strokeWidth="5" /><path d="M3 3l10 10M13 3L3 13" stroke="#fff" strokeWidth="3" /></Svg>
      </button>
    </div>
  </div>
);

const ToolButton = ({ label, icon, width, off, active }: { label: string; icon: ReactNode; width: string; off?: boolean; active?: boolean }) => (
  <button
    disabled={off}
    className={`flex flex-col items-center justify-center gap-[2px] h-[66px] rounded-md ${width} ${off ? 'text-[#b5b5b9]' : ''} ${active ? 'border-2 border-[#80838a] bg-linear-to-b from-[#e9f1f7] via-[#deebf6] to-[#d3e5f5]' : ''}`}
  >
    {icon}
    <span className="leading-[22px] whitespace-nowrap">{label}</span>
  </button>
);

const ToolSeparator = () => (
  <span className="flex w-4 justify-center"><span className="w-px h-[42px] bg-[#c4c4c6]" /></span>
);

const DropArrow = ({ label, off }: { label: string; off?: boolean }) => (
  <button aria-label={label} className="flex w-[33px] justify-center pt-1">
    <Svg size="w-3 h-2" box="0 0 12 8"><path d="M0 1h12L6 7z" fill={off ? '#aaa' : '#000'} stroke="none" /></Svg>
  </button>
);

const Toolbar = () => (
  <div className="flex items-center h-[71px] pl-px border-b-2 border-[#cfced1] bg-[#f5f4f6]">
    <ToolButton label="New" width="w-[77px]" icon={<NewIcon />} />
    <ToolButton label="Open..." width="w-[76px]" icon={<OpenIcon />} />
    <ToolButton label="Save" width="w-[77px]" icon={<SaveIcon />} />
    <ToolSeparator />
    <ToolButton label="Undo" width="w-[58px]" icon={<UndoIcon />} />
    <DropArrow label="Undo history" />
    <ToolButton label="Redo" width="w-[60px]" icon={<UndoIcon off />} off />
    <DropArrow label="Redo history" off />
    <ToolSeparator />
    <ToolButton label="Cut" width="w-[76px]" icon={<CutIcon />} />
    <ToolButton label="Copy" width="w-[77px]" icon={<CopyIcon />} />
    <ToolButton label="Paste" width="w-[77px]" icon={<PasteIcon />} off />
    <ToolSeparator />
    <ToolButton label="Select" width="w-[74px]" icon={<SelectIcon />} active />
    <ToolButton label="Drag Resize" width="w-[116px]" icon={<ResizeIcon />} />
  </div>
);

const GroupHeader = ({ label, closed }: { label: string; closed?: boolean }) => (
  <button aria-expanded={!closed} className="flex items-center w-full h-[34px] pl-[9px] gap-2 rounded-md border-2 border-[#97979a] bg-linear-to-b from-white via-[#fdfdfd] via-50% to-[#f1f0f2]">
    <Svg size="w-3 h-3" box="0 0 12 12">
      <path d={closed ? 'M3 0l5 6-5 6z' : 'M0 4h12L6 9z'} fill="#000" stroke="none" />
    </Svg>
    {label}
  </button>
);

const Palette = ({ tip }: { tip: boolean }) => (
  <aside className="relative w-[260px] shrink-0 border-2 border-[#c0bfc2] p-[2px] bg-[#f5f4f6]">
    {[
      { label: 'Toplevels', items: toplevels },
      { label: 'Containers', items: containers },
      { label: 'Control and Display', items: controls },
    ].map((group) => (
      <section key={group.label}>
        <GroupHeader label={group.label} />
        <div className="grid grid-cols-5 pt-1 pb-[3px]">
          {group.items.map((item) => (
            <button key={item.name} aria-label={item.name} className="flex items-center justify-center h-11">{item.icon}</button>
          ))}
        </div>
      </section>
    ))}
    <GroupHeader label="Gtk+ Obsolete" closed />
    {tip && (
      <div role="tooltip" className="absolute left-[207px] top-[306px] w-[45px] h-6 border-2 border-[#222] bg-[#dedee3] text-[15px] leading-5 text-center">
        Fixed
      </div>
    )}
  </aside>
);

const DotGrid = ({ id }: { id: string }) => (
  <svg className="absolute inset-0 w-full h-full" aria-hidden="true">
    <defs>
      <pattern id={id} width="10.38" height="10.38" patternUnits="userSpaceOnUse">
        <rect x="7.5" y="5.5" width="2.2" height="2" fill="#a3a8aa" />
      </pattern>
    </defs>
    <rect width="100%" height="100%" fill={`url(#${id})`} />
  </svg>
);

const Handles = () => (
  <>
    <span className="absolute left-0 top-0 w-[9px] h-[9px] bg-black" />
    <span className="absolute right-0 top-0 w-[9px] h-[9px] bg-black" />
    <span className="absolute left-0 bottom-0 w-[9px] h-[9px] bg-black" />
    <span className="absolute right-0 bottom-0 w-[9px] h-[9px] bg-black" />
  </>
);

const TreeRow = ({ label, indent, arrow, icon, selected }: { label: string; indent: string; arrow?: 'open' | 'closed'; icon: ReactNode; selected?: boolean }) => (
  <li className={`flex items-center h-8 ${indent} ${selected ? 'bg-linear-to-b from-[#8abbeb] to-[#75abe2] text-[#1d3d63]' : ''}`}>
    <span className="w-[25px] shrink-0">
      {arrow && (
        <Svg size="w-4 h-4" box="0 0 16 16">
          <path d={arrow === 'open' ? 'M1 4h14L8 12z' : 'M5 1l7 7-7 7z'} fill="#fff" stroke="#333" />
        </Svg>
      )}
    </span>
    <span className="w-[30px] shrink-0">{icon}</span>
    {label}
  </li>
);

const WindowMini = () => (
  <Svg size="w-[22px] h-5" box="0 0 22 20">
    <rect x="1" y="1" width="20" height="18" rx="1" fill="#e9e9ea" />
    <path d="M1 3h20" stroke="#999" strokeWidth="3" />
  </Svg>
);

const FixedMini = () => (
  <Svg size="w-5 h-5" box="0 0 20 20">
    <rect x="1" y="1" width="18" height="18" rx="1" fill="#fff" />
    {dots(3, 3, 6, 6, 2.5)}
  </Svg>
);

const ComboMini = () => (
  <Svg size="w-[22px] h-5" box="0 0 22 20">
    <rect x="1" y="5" width="20" height="10" rx="1.5" fill="#fff" stroke="#776" />
    <path d="M14 5v10M5 7.5v5" stroke="#333" />
    <path d="M15.5 8.5h4l-2 3z" fill="#222" stroke="none" />
  </Svg>
);

const Tabs = () => (
  <div role="tablist" className="flex items-end h-[37px]">
    <button role="tab" aria-selected="true" className="flex items-center justify-center w-[78px] h-full rounded-t-md border-2 border-b-0 border-[#97979a] border-t-[#6f9fd6] bg-[#f9f8fa]"><Key text="General" /></button>
    <button role="tab" className="flex items-center justify-center w-[72px] h-[35px] border-y-2 border-r-2 border-[#97979a] bg-linear-to-b from-[#eae9e7] to-[#dfdedb]"><Key text="Packing" /></button>
    <button role="tab" className="flex items-center justify-center w-[87px] h-[35px] border-y-2 border-r-2 border-[#97979a] bg-linear-to-b from-[#eae9e7] to-[#dfdedb]"><Key text="Common" /></button>
    <button role="tab" className="flex items-center justify-center w-[70px] h-[35px] border-y-2 border-r-2 border-[#97979a] bg-linear-to-b from-[#eae9e7] to-[#dfdedb]"><Key text="Signals" /></button>
    <button role="tab" aria-label="Accessibility" className="flex items-center justify-center flex-1 h-[35px] rounded-tr-md border-y-2 border-r-2 border-[#97979a] bg-linear-to-b from-[#eae9e7] to-[#dfdedb]"><Wheelchair /></button>
  </div>
);

const ScrollArrow = ({ d, label, cls, fill = '#000' }: { d: string; label: string; cls: string; fill?: string }) => (
  <button aria-label={label} className={`flex items-center justify-center shrink-0 bg-[#fcfcfd] border-[#97979a] ${cls}`}>
    <Svg size="w-[10px] h-[10px]" box="0 0 10 10"><path d={d} fill={fill} stroke="none" /></Svg>
  </button>
);

const SimpleProperties = () => (
  <div className="flex-1 mx-[6px] my-2 border-2 border-[#b4b3b6] pt-[3px] pr-1">
    <div className="flex flex-col gap-[6px]">
      {[
        { id: 'fixed-class', label: 'Class:', value: 'GtkFixed' },
        { id: 'fixed-name', label: 'Name:', value: 'fixed1' },
      ].map((f) => (
        <div key={f.id} className="flex items-center gap-[9px]">
          <label htmlFor={f.id} className="w-[67px] text-right">{f.label}</label>
          <input id={f.id} defaultValue={f.value} className="flex-1 min-w-0 h-8 px-[3px] rounded-md border-2 border-[#a5a4a8] bg-white" />
        </div>
      ))}
    </div>
  </div>
);

const comboFields: Field[] = [
  { label: 'Class:', value: 'GtkComboBoxEntry', kind: 'text' },
  { label: 'Name:', value: 'comboboxentry1', kind: 'text' },
  { label: 'Text Column:', value: '-1', kind: 'spin' },
  { label: 'Wrap width:', value: '0', kind: 'spin' },
  { label: 'pan column:', value: '-1', kind: 'spin' },
  { label: 'pan column:', value: '-1', kind: 'spin' },
  { label: 'Active item:', value: '-1', kind: 'spin' },
  { label: 'fs to menus:', value: 'No', kind: 'toggle' },
  { label: 'Tearoff Title:', value: '', kind: 'text' },
  { label: 'Has Frame:', value: 'Yes', kind: 'toggle' },
  { label: 'cus on click:', value: 'Yes', kind: 'toggle' },
];

const ComboProperties = () => (
  <div className="flex-1 flex flex-col gap-1 mx-[6px] mb-[6px] mt-2">
    <div className="flex-1 flex gap-1">
      <div className="flex-1 min-w-0 flex flex-col justify-between overflow-hidden h-[437px] border-2 border-[#b4b3b6] pt-[2px]">
        {comboFields.map((f, i) => {
          const id = `combo-field-${i}`;
          return (
            <div key={id} className="flex items-center gap-[9px]">
              <span className="flex justify-end w-[101px] shrink-0 overflow-hidden whitespace-nowrap">
                <label htmlFor={id}>{f.label}</label>
              </span>
              {f.kind === 'toggle' ? (
                <button
                  id={id}
                  className={`w-[204px] shrink-0 h-[35px] rounded-md border-2 border-[#8f8f94] ${f.value === 'Yes' ? 'bg-linear-to-b from-[#e7ecf6] via-[#d6e4f1] to-[#dcebf5]' : 'bg-linear-to-b from-white to-[#f1f0f3]'}`}
                >
                  {f.value}
                </button>
              ) : (
                <span className="relative flex w-[204px] shrink-0">
                  <input id={id} defaultValue={f.value} className="w-full h-8 px-[3px] rounded-md border-2 border-[#97979a] bg-white" />
                  {f.kind === 'spin' && <span className="absolute left-[185px] top-0 w-[2px] h-8 bg-[#97979a]" />}
                </span>
              )}
            </div>
          );
        })}
        <div className="flex h-[10px] pl-[109px] gap-[2px] shrink-0">
          <span className="w-[176px] shrink-0 border-2 border-b-0 border-[#a5a4a8] bg-white" />
          <span className="w-8 shrink-0 rounded-tl-md border-2 border-b-0 border-[#97979a] bg-white" />
        </div>
      </div>
      <div className="flex flex-col w-[19px] h-[437px] rounded-md border-2 border-[#97979a] bg-[#c9c8ca] overflow-hidden">
        <ScrollArrow label="Scroll up" d="M1 7h8L5 3z" fill="#999" cls="h-[18px] border-b-2" />
        <span className="h-[321px] bg-linear-to-r from-[#c3dcf3] to-[#a5c9ea]" />
        <ScrollArrow label="Scroll down" d="M0 3h10L5 8z" cls="h-[18px] mt-auto border-t-2" />
      </div>
    </div>
    <div className="flex w-[302px] h-5 rounded-md border-2 border-[#97979a] bg-[#c9c8ca] overflow-hidden">
      <ScrollArrow label="Scroll left" d="M7 0v10L2 5z" cls="w-[18px] border-r-2" />
      <span className="w-[182px] ml-[66px] border-x-2 border-[#8fb4dc] bg-linear-to-b from-[#c3dcf3] to-[#a5c9ea]" />
      <ScrollArrow label="Scroll right" d="M3 0v10l5-5z" cls="w-[18px] ml-auto border-l-2" />
    </div>
  </div>
);

const Inspector = ({ tree, heading, children }: { tree: ReactNode; heading: string; children: ReactNode }) => (
  <aside className="flex flex-col w-[343px] shrink-0 mr-[3px]">
    <ul className="h-[194px] shrink-0 border-2 border-[#b4b3b6] bg-white">{tree}</ul>
    <span className="self-center w-[62px] h-[7px] bg-[radial-gradient(#bbb_1px,transparent_1px)] bg-[size:4px_4px]" />
    <h3 className="h-9 leading-9 pl-[2px] whitespace-nowrap overflow-hidden">{heading}</h3>
    <Tabs />
    <div className="flex-1 flex flex-col border-2 border-t-0 border-[#97979a]">{children}</div>
    <button aria-label="Clear" className="flex items-center justify-center self-end w-[42px] h-[42px] mt-2 rounded-md border-2 border-[#8f8f94] bg-white">
      <BroomIcon />
    </button>
  </aside>
);

const Task = ({ label, icon, active }: { label: string; icon: ReactNode; active?: boolean }) => (
  <button className={`flex items-center w-[241px] h-[29px] pl-[9px] rounded-md border-2 border-[#8f8f94] ${active ? 'bg-linear-to-b from-[#eef3f8] to-[#d6e6f1]' : 'bg-linear-to-b from-white to-[#f3f2f4]'}`}>
    <span className="w-[29px] shrink-0">{icon}</span>
    {label}
  </button>
);

const DocIcon = () => (
  <Svg size="w-[18px] h-5" box="0 0 18 20">
    <path d="M1 1h11l5 5v13H1z" fill="#f4f6f9" stroke="#c3c8d2" />
    <path d="M4 5h6M4 8h8M4 11h3" stroke="#b5bfd0" />
    <rect x="8" y="11" width="6" height="5" fill="#b9c8e2" stroke="none" />
  </Svg>
);

const ShellIcon = () => (
  <Svg size="w-5 h-5" box="0 0 20 20">
    <rect x="1" y="1" width="18" height="18" fill="#c9c9c6" stroke="#aaa" />
    <rect x="4" y="4" width="12" height="11" fill="#9ea49e" stroke="#888" />
  </Svg>
);

const NoteIcon = () => (
  <Svg size="w-5 h-5" box="0 0 20 20">
    <rect x="1.5" y="2" width="15" height="17" fill="#faf8ee" stroke="#bbb" />
    <path d="M1.5 3.5h15" stroke="#ead579" strokeWidth="3" />
    <path d="M18 5l-8 10-2 1v-2l8-10z" fill="#efd27a" stroke="#b99a4c" />
  </Svg>
);

const ImageIcon = () => (
  <Svg size="w-5 h-5" box="0 0 20 20">
    <rect x="1" y="4" width="18" height="13" rx="1" fill="#eee" stroke="#aaa" />
    <path d="M4 8h12M4 12h8" stroke="#ccc" />
  </Svg>
);

const TaskBar = ({ tasks, pager }: { tasks: ReactNode; pager: ReactNode }) => (
  <footer className="flex items-center h-8 pl-px pr-1 bg-[#f5f4f6]">
    <button aria-label="Show desktop" className="flex items-center justify-center w-[29px] h-[29px] rounded-md border-2 border-[#8f8f94] bg-white">
      <Svg size="w-[22px] h-[22px]" box="0 0 22 22">
        <path d="M1 1h7v7H1zM14 1h7v7h-7zM1 14h7v7H1zM14 14h7v7h-7z" fill="#525c74" stroke="none" />
        <circle cx="11" cy="11" r="8" fill="#b5be96" stroke="#5d6350" strokeWidth="1.400" />
      </Svg>
    </button>
    <span className="w-2 h-6 ml-1 mr-[3px] bg-[radial-gradient(#bbb_1px,transparent_1px)] bg-[size:4px_4px]" />
    <div className="flex gap-[3px]">{tasks}</div>
    <div className="flex w-[168px] h-7 ml-auto mr-1 border-2 border-[#a5a4a8]">{pager}</div>
    <TrashIcon />
  </footer>
);

const Desktop = ({ title, temp, time, offline, tip, workspace, inspector, tasks, pager, marks }: {
  title: string;
  temp: string;
  time: string;
  offline: boolean;
  tip: boolean;
  workspace: ReactNode;
  inspector: ReactNode;
  tasks: ReactNode;
  pager: ReactNode;
  marks: ReactNode;
}) => (
  <section className="relative ml-[195px] mr-[194px] bg-[#f5f4f6] font-['DejaVu_Sans',sans-serif] text-[16px] leading-5 text-[#2a2c30]">
    <TopPanel temp={temp} time={time} offline={offline} />
    <TitleBar title={title} />
    <nav className="flex items-center gap-[18px] h-8 pl-[10px] border-b-2 border-[#cfced1] bg-linear-to-b from-[#f4f4f5] to-[#e9e9ec]">
      {['File', 'Edit', 'View', 'Projects', 'Help'].map((m) => (
        <button key={m}><Key text={m} /></button>
      ))}
    </nav>
    <Toolbar />
    <main className="flex min-h-[802px] mt-[2px] pl-[2px]">
      <Palette tip={tip} />
      <div className="flex w-[7px] justify-center shrink-0"><GripV /></div>
      <div className="flex-1 min-w-0 border-2 border-[#b4b3b6] bg-[#fefefe]">{workspace}</div>
      <div className="flex w-2 justify-center shrink-0"><GripV /></div>
      {inspector}
    </main>
    <div className="h-[30px] mt-[3px] border-t-2 border-[#cfced1] border-b-2 border-b-[#8f8f94] bg-linear-to-b from-[#f5f4f6] via-[#f5f4f6] via-75% to-[#dcdbde]" />
    <TaskBar tasks={tasks} pager={pager} />
    <svg className="absolute inset-0 w-full h-full pointer-events-none" viewBox="0 0 1660 1036" fill="none" stroke="#111" strokeWidth="1.6" strokeLinejoin="round" aria-hidden="true">
      {marks}
    </svg>
  </section>
);

export default function App() {
  return (
    <div className="min-h-[2898px] bg-[#fefefe] pt-[196px]">
      <h1 className="pl-[423px] mb-[94px] font-['Liberation_Serif',serif] font-bold text-[41px] leading-[48px] text-black">
        Drag and drop “fixed” widget and plce inside toplevel window
      </h1>

      <Desktop
        title="*Unsaved 1"
        temp="35 °C"
        time="Thu Jun 11,  2:25 PM"
        offline
        tip
        workspace={
          <>
            <div className="relative w-[904px] h-[491px] ml-4 mt-[14px] border-[5px] border-[#8fbcec] bg-[#d5d8da]">
              <DotGrid id="grid-a" />
              <div className="absolute inset-0 border-2 border-[#1b2733]" />
              <Handles />
            </div>
            <p className="pl-[66px] mt-[55px] text-[23px] leading-8 text-black">Drag and drop Fixed widget from Containers and place inside Window</p>
          </>
        }
        inspector={
          <Inspector
            heading="fixed1 [GtkFixed] - Properties"
            tree={
              <>
                <TreeRow label="window1" indent="pl-[2px]" arrow="open" icon={<WindowMini />} />
                <TreeRow label="fixed1" indent="pl-[25px]" icon={<FixedMini />} selected />
              </>
            }
          >
            <SimpleProperties />
          </Inspector>
        }
        tasks={
          <>
            <Task label="[comboboxentry_gui..." icon={<DocIcon />} />
            <Task label="[logesh@logesh-lapt..." icon={<ShellIcon />} />
            <Task label="[test.rb (~/alan/exa..." icon={<NoteIcon />} />
            <Task label="*Unsaved 1" icon={<GladeIcon size="w-5 h-5" />} active />
          </>
        }
        pager={
          <>
            <span className="flex flex-1 items-center justify-center bg-[#f2f8fd] border-t-2 border-[#5b8fd0]"><GladeIcon size="w-5 h-5" /></span>
            <span className="flex-1 border-r-2 border-[#d5d5d7] bg-[#acacaf]" />
            <span className="flex-1 border-r-2 border-[#d5d5d7] bg-[#acacaf]" />
            <span className="flex-1 bg-[#acacaf]" />
          </>
        }
        marks={
          <>
            <path d="M153 416h15l4-2h20l1 3h14l3 7 5 13-3 15-5 8-12 12-5 3h-8l-3-1-3 2-3-1-8-1-3-3-9-10-2-15 2-12 2-4-1-5 5-7 3-8M157 413v6" />
            <path d="M1401 242l-9 1-4 3h-6l-2-1-5 1-2-2-8-1-6-5-3-9 2-12 2-12 7-8 19-2 2-3h31l10 3h20l7 2 2 9 4 9 2 11-10 1-18 12h-16l-4 1h-12l-7-1" />
            <path d="M1385 512v-13l12-12 10-1 1-2h5l2 2h8v-2l2 2 23 1 10 6 9 3 1 6 4 7-2 3-1 8-12 8-9 7h-16l-3-2-13-1-2-3-2 3M1417 537l-4-1-3 2-2-1h-8l-12-13-3-12" />
          </>
        }
      />

      <h1 className="pl-[733px] mt-[96px] mb-[46px] font-['Liberation_Serif',serif] font-bold text-[41px] leading-[48px] text-black">
        Take comboboxentry
      </h1>

      <Desktop
        title="*Unsaved 2"
        temp="33 °C"
        time="Thu Jun 11,  6:51 PM"
        offline={false}
        tip={false}
        workspace={
          <div className="relative w-[866px] h-[532px] ml-4 mt-[15px] border-[5px] border-[#8fbcec] bg-[#d5d8da]">
            <DotGrid id="grid-b" />
            <div className="absolute left-[132px] top-[180px] flex w-[130px] h-[104px] border-2 border-black bg-white">
              <input aria-label="comboboxentry1" className="flex-1 min-w-0 bg-white" />
              <button aria-label="Open list" className="flex items-center justify-center w-9 border-l-2 border-[#a5a4a8] bg-linear-to-b from-white to-[#f3f3f5]">
                <Svg size="w-3 h-2" box="0 0 12 8"><path d="M0 1h12L6 6z" fill="#000" stroke="none" /></Svg>
              </button>
              <Handles />
            </div>
          </div>
        }
        inspector={
          <Inspector
            heading="comboboxentry1 [GtkComboBoxEntr..."
            tree={
              <>
                <TreeRow label="window1" indent="pl-[2px]" arrow="open" icon={<WindowMini />} />
                <TreeRow label="fixed1" indent="pl-[25px]" arrow="open" icon={<FixedMini />} />
                <TreeRow label="comboboxentry1" indent="pl-[48px]" arrow="closed" icon={<ComboMini />} selected />
              </>
            }
          >
            <ComboProperties />
          </Inspector>
        }
        tasks={
          <>
            <Task label="*Unsaved 2" icon={<GladeIcon size="w-5 h-5" />} active />
            <Task label="5.png" icon={<ImageIcon />} />
          </>
        }
        pager={
          <>
            <span className="flex flex-1 items-center justify-center border-r-2 border-white bg-[#8fbcec]"><CabinetIcon /></span>
            <span className="flex flex-1 items-center justify-center border-r-2 border-white bg-[#8fbcec]"><CabinetIcon /></span>
            <span className="relative flex flex-1 items-center justify-center bg-[#8fbcec]">
              <CabinetIcon />
              <span className="absolute right-0 bottom-0 w-5 h-4 border-l-2 border-t-2 border-white bg-[#8fbcec]" />
            </span>
            <span className="flex flex-1 items-center justify-center bg-[#f2f8fd] border-t-2 border-[#5b8fd0]"><GladeIcon size="w-5 h-5" /></span>
          </>
        }
        marks={
          <>
            <defs>
              <radialGradient id="smudge">
                <stop offset="0" stopColor="#999" stopOpacity="0.6" />
                <stop offset="0.5" stopColor="#bbb" stopOpacity="0.3" />
                <stop offset="1" stopColor="#ddd" stopOpacity="0" />
              </radialGradient>
            </defs>
            <ellipse cx="268" cy="752" rx="40" ry="3" fill="#fff" stroke="none" opacity="0.8" />
            <ellipse cx="345" cy="752" rx="34" ry="4" fill="url(#smudge)" stroke="none" />
            <ellipse cx="373" cy="752" rx="19" ry="17" fill="url(#smudge)" stroke="none" />
            <rect x="212" y="695" width="40" height="33" stroke="#777" strokeWidth="1.5" strokeDasharray="2 2" />
            <path d="M418 448L272 678M560 418L1347 513" strokeWidth="1.4" />
            <path d="M272 684l-14-2-5-3h-21l-2 2-12 1-5 2-8 2-5 5-2 10 2 14 3 6 2 7 12 6 1-2 8 2h10l2 2h20l2-2h12l12-3 10-9 5-9-2-14-8-8-10-3-9-4" />
            <path d="M1359 243v25l8 9 1 5 12 1 3 10 10 5 12 6 8 2 5 3h20l5-1 3-3h10l2 2h19l2-3 2 3h5l4-3 25-4 5-2 15-5 15-6 8-4 4-8 4-14 4-8-11-13-13-10-15-8-15-4-25-4-38-1-39 3-18 4-15 7-10 8z" />
            <path d="M1365 280h7l1 4 3 5h3" />
          </>
        }
      />
    </div>
  );
}
